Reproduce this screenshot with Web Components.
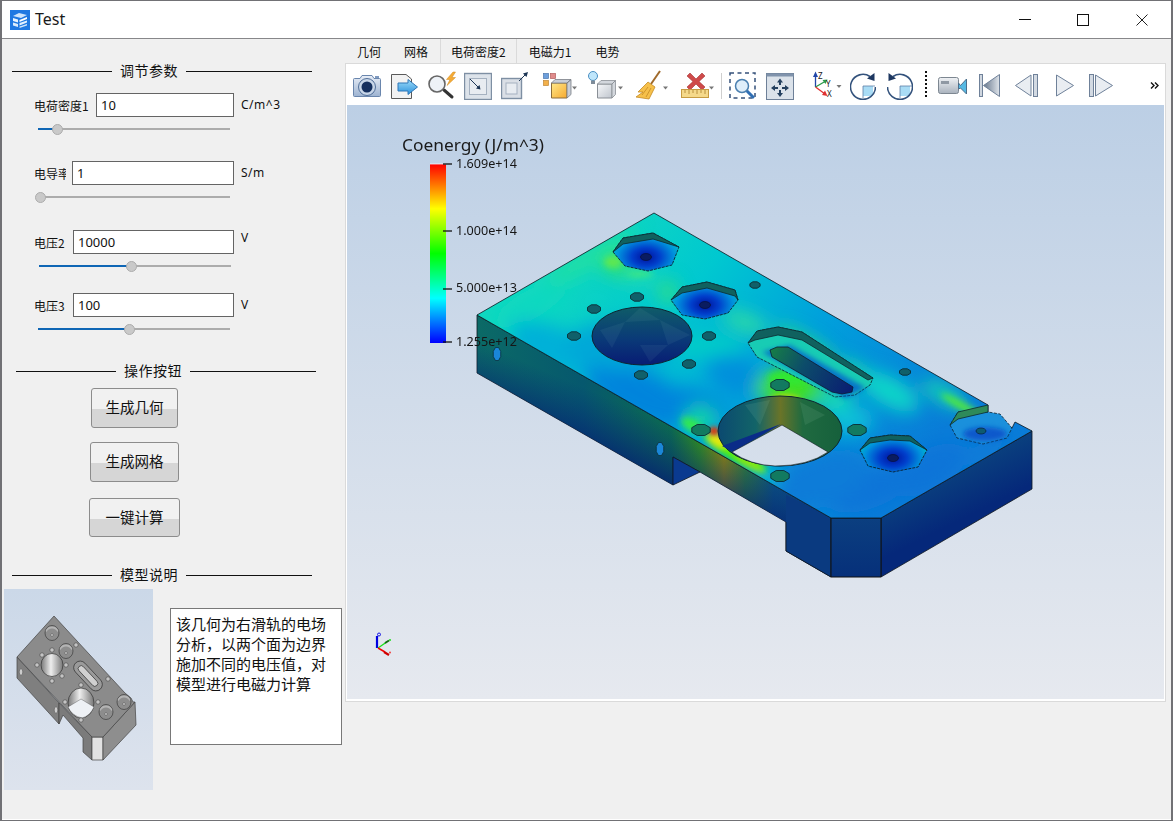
<!DOCTYPE html>
<html lang="zh">
<head>
<meta charset="utf-8">
<title>Test</title>
<style>
  html, body { margin: 0; padding: 0; background: #f0f0f0; }
  body { font-family: "Noto Sans", "Noto Sans CJK SC", sans-serif; color: #111; }
</style>
</head>
<body>
<app-window>
  <title-bar slot="title" text="Test"></title-bar>

  <side-panel slot="side">
    <section-heading text="调节参数" style="margin:22px 0 0 10px"></section-heading>

    <param-row label="电荷密度1" label-w="62" input-w="138" value="10" unit="C/m^3" style="margin:12px 0 0 32px"></param-row>
    <param-slider fill="19" style="margin:4px 0 0 36px"></param-slider>

    <param-row label="电导率" label-w="38" input-w="162" value="1" unit="S/m" style="margin:24px 0 0 32px"></param-row>
    <param-slider fill="2" style="margin:4px 0 0 36px"></param-slider>

    <param-row label="电压2" label-w="39" input-w="161" value="10000" unit="V" shift="-4" style="margin:25px 0 0 32px"></param-row>
    <param-slider fill="92" style="margin:4px 0 0 37px"></param-slider>

    <param-row label="电压3" label-w="39" input-w="161" value="100" unit="V" style="margin:19px 0 0 32px"></param-row>
    <param-slider fill="91" style="margin:4px 0 0 36px"></param-slider>

    <section-heading text="操作按钮" style="margin:24px 0 0 14px"></section-heading>
    <push-button text="生成几何" style="width:87px;height:40px;margin:7px 0 0 89px"></push-button>
    <push-button text="生成网格" style="width:89px;height:40px;margin:14px 0 0 88px"></push-button>
    <push-button text="一键计算" style="width:91px;height:39px;margin:16px 0 0 87px"></push-button>

    <section-heading text="模型说明" style="margin:28px 0 0 10px"></section-heading>
    <model-note style="margin:4px 0 0 2px">该几何为右滑轨的电场分析，以两个面为边界施加不同的电压值，对模型进行电磁力计算</model-note>
  </side-panel>

  <tab-bar slot="tabs">
    <tab-item text="几何" style="padding:0 11px 0 12px"></tab-item>
    <tab-item text="网格" style="padding:0 12px 0 12px"></tab-item>
    <tab-item text="电荷密度2" active style="padding:0 10px 0 10px"></tab-item>
    <tab-item text="电磁力1" style="padding:0 12px 0 12px"></tab-item>
    <tab-item text="电势" style="padding:0 12px 0 12px"></tab-item>
  </tab-bar>

  <tool-bar slot="tools">
    <tool-icon kind="camera" gap="6"></tool-icon>
    <tool-icon kind="docarrow" gap="10"></tool-icon>
    <tool-icon kind="zoombolt" gap="9"></tool-icon>
    <tool-icon kind="boxin" gap="8"></tool-icon>
    <tool-icon kind="boxout" gap="9"></tool-icon>
    <tool-icon kind="colorbox" gap="14"></tool-icon>
    <tool-icon kind="lightbox" gap="11"></tool-icon>
    <tool-icon kind="broom" gap="13"></tool-icon>
    <tool-icon kind="ruler" gap="12"></tool-icon>
    <tool-icon kind="sep" gap="6"></tool-icon>
    <tool-icon kind="zoomrect" gap="7"></tool-icon>
    <tool-icon kind="move" gap="10"></tool-icon>
    <tool-icon kind="axes" gap="18"></tool-icon>
    <tool-icon kind="rotcw" gap="8"></tool-icon>
    <tool-icon kind="rotccw" gap="11"></tool-icon>
    <tool-icon kind="dots" gap="12"></tool-icon>
    <tool-icon kind="video" gap="11"></tool-icon>
    <tool-icon kind="first" gap="12"></tool-icon>
    <tool-icon kind="prev" gap="15"></tool-icon>
    <tool-icon kind="play" gap="18"></tool-icon>
    <tool-icon kind="next" gap="15"></tool-icon>
    <tool-icon kind="more" gap="37"></tool-icon>
  </tool-bar>

  <field-view slot="view"></field-view>
</app-window>

<script>
class AppWindow extends HTMLElement {
  constructor() {
    super();
    this.attachShadow({ mode: "open" });
    this.shadowRoot.innerHTML = `
      <style>
        :host { display:flex; flex-direction:column; box-sizing:border-box; width:1173px; height:821px; overflow:hidden;
                border:solid #717175; border-width:1px 2px 1px 2px; background:#f0f0f0; }
        .body { flex:1; display:flex; min-height:0; border-bottom:1px solid #fff; }
        .side { width:343px; flex:none; }
        .main { width:821px; flex:none; display:flex; flex-direction:column; }
        .pane { box-sizing:border-box; height:639px; border:1px solid #dadada; padding:1px; background:#fff; display:flex; flex-direction:column; }
      </style>
      <slot name="title"></slot>
      <div class="body">
        <div class="side"><slot name="side"></slot></div>
        <div class="main">
          <slot name="tabs"></slot>
          <div class="pane">
            <slot name="tools"></slot>
            <slot name="view"></slot>
          </div>
        </div>
      </div>
    `;
  }
}

class TitleBar extends HTMLElement {
  constructor() {
    super();
    this.attachShadow({ mode: "open" });
  }
  connectedCallback() {
    this.shadowRoot.innerHTML = `
      <style>
        :host { display:flex; align-items:center; height:37px; background:#fff; border-bottom:1px solid #87878a; flex:none; }
        svg.logo { margin:0 5px 0 8px; }
        .name { flex:1; font:16px "Noto Sans", sans-serif; color:#1a1a1a; margin-top:-1px; }
        .btn { width:58px; height:37px; display:flex; align-items:center; justify-content:center; }
        .max { margin-right:1px; }
      </style>
      <svg class="logo" width="20" height="20" viewBox="0 0 20 20">
        <rect width="20" height="20" fill="#1f78e2"/>
        <path d="M3 6 9 3 17 5 11 8Z" fill="#cfe4fb"/>
        <path d="M3 8 8 9.500V12.500L3 11Z" fill="#eaf4ff"/>
        <path d="M3 12.500 8 14V17L3 15.500Z" fill="#dcecfd"/>
        <path d="M9.500 10 17 7V9L9.500 12Z" fill="#fff"/>
        <path d="M9.500 13 17 10.500V12.500L9.500 15.500Z" fill="#e3f0fe"/>
        <path d="M9.500 16.500 17 14V15.500L9.500 18Z" fill="#cfe4fb"/>
      </svg>
      <div class="name">${this.getAttribute("text")}</div>
      <div class="btn"><svg width="12" height="12"><path d="M0 5.500H12" stroke="#111"/></svg></div>
      <div class="btn max"><svg width="12" height="12"><rect x=".5" y=".5" width="11" height="11" fill="none" stroke="#111"/></svg></div>
      <div class="btn"><svg width="12" height="12"><path d="M.5 .5 11.500 11.500M11.500 .5 .5 11.500" stroke="#222"/></svg></div>
    `;
  }
}

class SectionHeading extends HTMLElement {
  constructor() {
    super();
    this.attachShadow({ mode: "open" });
  }
  connectedCallback() {
    this.shadowRoot.innerHTML = `
      <style>
        :host { display:flex; align-items:center; width:300px; height:20px; font:14px "Noto Sans CJK SC", sans-serif; letter-spacing:.5px; color:#111; }
        i { height:1px; background:#111; }
        i.a { width:100px; }
        i.b { flex:1; }
        span { padding:0 8px; white-space:nowrap; margin-top:-3px; }
      </style>
      <i class="a"></i><span>${this.getAttribute("text")}</span><i class="b"></i>
    `;
  }
}

class ParamRow extends HTMLElement {
  constructor() {
    super();
    this.attachShadow({ mode: "open" });
  }
  connectedCallback() {
    const shift = this.getAttribute("shift") || 0;
    this.shadowRoot.innerHTML = `
      <style>
        :host { display:flex; align-items:center; height:24px; font:12px "Noto Sans CJK SC", sans-serif; color:#111; }
        .label { width:${this.getAttribute("label-w")}px; overflow:hidden; white-space:nowrap; box-sizing:border-box; }
        .input { box-sizing:border-box; height:24px; width:${this.getAttribute("input-w")}px; background:#fff; border:1px solid #646464;
                 font:13px "Noto Sans", sans-serif; line-height:22px; padding-left:4px; }
        .unit { margin:-1px 0 0 7px; font:12px "Noto Sans", sans-serif; position:relative; top:${shift}px; letter-spacing:.5px; }
      </style>
      <div class="label"><div style="width:${Math.min(+this.getAttribute("label-w") - 6, 56)}px;overflow:hidden">${this.getAttribute("label")}</div></div>
      <div class="input">${this.getAttribute("value")}</div>
      <div class="unit">${this.getAttribute("unit")}</div>
    `;
  }
}

class ParamSlider extends HTMLElement {
  constructor() {
    super();
    this.attachShadow({ mode: "open" });
  }
  connectedCallback() {
    const fill = +this.getAttribute("fill");
    this.shadowRoot.innerHTML = `
      <style>
        :host { display:block; position:relative; width:192px; height:16px; }
        .track { position:absolute; left:0; right:0; top:7px; height:2px; background:#acacac; }
        .done { position:absolute; left:0; top:7px; height:2px; width:${fill}px; background:#0f66b5; }
        .knob { position:absolute; left:${fill - 5}px; top:3px; width:9px; height:9px; border-radius:50%; background:#c9c9c9; border:1px solid #acacac; }
      </style>
      <div class="track"></div><div class="done"></div><div class="knob"></div>
    `;
  }
}

class PushButton extends HTMLElement {
  constructor() {
    super();
    this.attachShadow({ mode: "open" });
  }
  connectedCallback() {
    this.shadowRoot.innerHTML = `
      <style>
        :host { display:flex; align-items:center; justify-content:center; box-sizing:border-box; border:1px solid #8c8c8c; border-radius:3px;
                background:linear-gradient(#f1f1f1 0 53%, #d6d6d6 53% 100%); font:14.500px "Noto Sans CJK SC", sans-serif; color:#111; }
        span { margin-top:-3px; }
      </style>
      <span>${this.getAttribute("text")}</span>
    `;
  }
}

class ModelNote extends HTMLElement {
  constructor() {
    super();
    this.attachShadow({ mode: "open" });
    this.shadowRoot.innerHTML = `
      <style>
        :host { display:flex; align-items:flex-start; gap:17px; }
        .box { box-sizing:border-box; width:172px; height:137px; margin-top:19px; background:#fff; border:1px solid #787878;
               padding:5px 5px; font:15px/20px "Noto Sans CJK SC", sans-serif; color:#111; }
      </style>
      <part-thumb></part-thumb>
      <div class="box"><slot></slot></div>
    `;
  }
}

class PartThumb extends HTMLElement {
  constructor() {
    super();
    this.attachShadow({ mode: "open" });
    const small = [[52,650],[42,655],[76,645],[37,665],[66,665],[52,681],[62,676],[81,685],[108,679],[65,702],[98,702],[81,720]];
    const dots = small.map(([x, y]) => `<circle cx="${x}" cy="${y}" r="2.200" fill="#c4c4c4" stroke="#444" stroke-width=".6"/>`).join("");
    const bored = [[52,633],[66,651],[106,712],[124,702]].map(([x, y]) => `
      <ellipse cx="${x}" cy="${y}" rx="7" ry="7.500" fill="#8d8d8d" stroke="#3c3c3c" stroke-width=".7"/>
      <path d="M${x-6.500} ${y-2}A7 7 0 0 1 ${x+6.500} ${y-2}L${x+5.500} ${y-1}A6 6 0 0 0 ${x-5.500} ${y-1}Z" fill="#b4b4b4"/>
      <circle cx="${x}" cy="${y+2}" r="1.300" fill="#ddd" stroke="#444" stroke-width=".5"/>`).join("");
    this.shadowRoot.innerHTML = `
      <style>:host { display:block; flex:none; width:149px; height:201px; } svg { display:block; }</style>
      <svg width="149" height="201" viewBox="4 589 149 201">
        <defs>
          <linearGradient id="tb" x1="0" y1="0" x2="0" y2="1"><stop offset="0" stop-color="#cbd8e8"/><stop offset="1" stop-color="#dde3ed"/></linearGradient>
          <linearGradient id="cyl" x1="0" y1="0" x2="1" y2="0"><stop offset="0" stop-color="#777"/><stop offset=".45" stop-color="#eee"/><stop offset="1" stop-color="#777"/></linearGradient>
        </defs>
        <rect x="4" y="589" width="149" height="201" fill="url(#tb)"/>
        <g stroke="#444" stroke-width=".7" stroke-linejoin="round">
          <path d="M17 657 59 703V724L17 678Z" fill="#7f7f7f"/>
          <path d="M59 703 92 737V760L83 752V738L63 715 59 724Z" fill="#7b7b7b"/>
          <path d="M92 737H103V760H92Z" fill="#e2e2e2"/>
          <path d="M103 737 135 702 136 725 103 760Z" fill="#8e8e8e"/>
          <path d="M54 616 125 693 131 698 133 702 135 702 103 737H92L17 657Z" fill="#8b8b8b"/>
        </g>
        <ellipse cx="52" cy="665" rx="11" ry="11.500" fill="url(#cyl)" stroke="#333" stroke-width=".7"/>
        <g transform="rotate(47 88 676)">
          <rect x="70" y="669.500" width="36" height="13" rx="6.500" fill="#9a9a9a" stroke="#333" stroke-width=".7"/>
          <rect x="75" y="673" width="26" height="6" rx="3" fill="#d0d0d0" stroke="#333" stroke-width=".7"/>
        </g>
        <ellipse cx="81" cy="703" rx="13" ry="15" fill="url(#cyl)" stroke="#333" stroke-width=".7"/>
        <path d="M68 707 81 699 94 707Q90 716 82 718 72 716 68 707Z" fill="#eef1f5" stroke="#444" stroke-width=".4"/>
        ${bored}${dots}
        <ellipse cx="21" cy="672" rx="1.800" ry="3.200" fill="#ccc" stroke="#444" stroke-width=".5"/>
        <ellipse cx="56" cy="710" rx="1.800" ry="3.200" fill="#ccc" stroke="#444" stroke-width=".5"/>
      </svg>
    `;
  }
}

class TabBar extends HTMLElement {
  constructor() {
    super();
    this.attachShadow({ mode: "open" });
    this.shadowRoot.innerHTML = `
      <style>:host { display:flex; height:24px; flex:none; }</style>
      <slot></slot>
    `;
  }
}

class TabItem extends HTMLElement {
  constructor() {
    super();
    this.attachShadow({ mode: "open" });
  }
  connectedCallback() {
    this.shadowRoot.innerHTML = `
      <style>
        :host { display:flex; align-items:center; height:24px; box-sizing:border-box; font:12px "Noto Sans CJK SC", sans-serif; color:#111; white-space:nowrap; }
        :host([active]) { border:solid #dadada; border-width:0 1px; }
      </style>
      ${this.getAttribute("text")}
    `;
  }
}

class ToolBar extends HTMLElement {
  constructor() {
    super();
    this.attachShadow({ mode: "open" });
    this.shadowRoot.innerHTML = `
      <style>:host { display:flex; align-items:flex-start; flex:none; height:40px; padding-top:5px; box-sizing:border-box; background:#fff; }</style>
      <slot></slot>
    `;
  }
}

const arrowDown = (x) => `<path d="M${x} 16.500h5l-2.500 3z" fill="#777"/>`;

const TOOL_ICONS = {
  camera: [28, `
    <defs><linearGradient id="g" x1="0" y1="0" x2="0" y2="1"><stop offset="0" stop-color="#e8eef7"/><stop offset="1" stop-color="#9db3d1"/></linearGradient></defs>
    <path d="M1.500 8.500H7L9 5.500H19L21 8.500H26.500Q27.500 8.500 27.500 9.500V25.500Q27.500 26.500 26.500 26.500H1.500Q.5 26.500 .5 25.500V9.500Q.5 8.500 1.500 8.500Z" fill="url(#g)" stroke="#6a86ad"/>
    <circle cx="14" cy="17" r="8.500" fill="#c8d6e8" stroke="#516f99"/>
    <circle cx="14" cy="17" r="5.500" fill="#15305f"/>
    <rect x="22" y="6" width="4" height="2" fill="#7f9ac0"/>`],
  docarrow: [27, `
    <defs><linearGradient id="g" x1="0" y1="0" x2="0" y2="1"><stop offset="0" stop-color="#9edcf9"/><stop offset="1" stop-color="#2b91dc"/></linearGradient></defs>
    <path d="M.5 4.500H15L20.500 9V28.500H.5Z" fill="#f2f2f2" stroke="#5a5a5a"/>
    <path d="M7 13H17V9.500L26.500 17 17 24.500V21H7Z" fill="url(#g)" stroke="#2f77b8"/>`],
  zoombolt: [29, `
    <path d="M17 20 25 27" stroke="#333" stroke-width="3" stroke-linecap="round"/>
    <circle cx="10" cy="14" r="8" fill="#eef2f7" stroke="#666" stroke-width="1.600"/>
    <path d="M26 2 19.500 9.500H23L20 15.500 28.500 7.500H25L28.500 2Z" fill="#f5ab36" stroke="#d08a20" stroke-width=".5"/>`],
  boxin: [28, `
    <rect x=".5" y="3.500" width="27" height="26" fill="#dde3ea" stroke="#7e8fa3" stroke-width="1.400"/>
    <rect x="5.500" y="8.500" width="17" height="16" fill="#e8ecf1" stroke="#a5b1c0"/>
    <path d="M6 9 14.500 17.500" stroke="#1c3554" stroke-width="1"/>
    <path d="M16.500 19.500 12 18.500 15.500 15Z" fill="#1c3554"/>`],
  boxout: [28, `
    <rect x=".5" y="8.500" width="20" height="20" fill="#dadfe6" stroke="#7e8fa3" stroke-width="1.400"/>
    <rect x="5" y="13" width="11" height="11" fill="#e8ecf1" stroke="#a5b1c0"/>
    <path d="M18 11 25 4" stroke="#1c3554" stroke-width="1"/>
    <path d="M27 2 25.500 7 22 3.500Z" fill="#1c3554"/>`],
  colorbox: [34, `
    <defs><linearGradient id="g" x1="0" y1="0" x2="1" y2="1"><stop offset="0" stop-color="#ffe98a"/><stop offset="1" stop-color="#f6a92f"/></linearGradient></defs>
    <rect x=".5" y="3.500" width="5" height="5" fill="#6d9fdc" stroke="#4a76ad" stroke-width=".7"/>
    <rect x="7.500" y="3.500" width="5" height="5" fill="#e08c8c" stroke="#b25c5c" stroke-width=".7"/>
    <rect x=".5" y="10.500" width="5" height="5" fill="#f2b04a" stroke="#c18736" stroke-width=".7"/>
    <path d="M8.500 13H24V28H8.500Z" fill="url(#g)" stroke="#8c6d3a"/>
    <path d="M8.500 13 12 9.500H28L24 13ZM24 13 28 9.500V24.500L24 28Z" fill="#c9ced6" stroke="#7a7f87" stroke-width=".8"/>
    ${arrowDown(29)}`],
  lightbox: [35, `
    <defs><linearGradient id="g" x1="0" y1="0" x2="1" y2="1"><stop offset="0" stop-color="#f7f8fa"/><stop offset="1" stop-color="#bfc5cd"/></linearGradient></defs>
    <circle cx="5" cy="6" r="4.500" fill="#bfe6fb" stroke="#4a8fc2"/>
    <rect x="3" y="10.500" width="4" height="3.500" fill="#7f8c99"/>
    <path d="M9.500 14H24V28H9.500Z" fill="url(#g)" stroke="#8a8f96"/>
    <path d="M9.500 14 13 10.500H27.500L24 14ZM24 14 27.500 10.500V24.500L24 28Z" fill="#d3d7dd" stroke="#8a8f96" stroke-width=".8"/>
    ${arrowDown(30)}`],
  broom: [33, `
    <path d="M24 1 15 14" stroke="#a06a2c" stroke-width="2"/>
    <path d="M12 12 19 17 13 29 0 27 7 22 2 22Z" fill="#f6c04a" stroke="#c48a24" stroke-width=".8"/>
    <path d="M6 25 12 17M10 27 15 18" stroke="#c48a24" stroke-width=".8"/>
    ${arrowDown(27)}`],
  ruler: [34, `
    <path d="M9 3 15 9 21 3 24 6 18 11.500 24 17 21 20 15 14 9 20 6 17 12 11.500 6 6Z" fill="#cf4a4a" stroke="#a53030" stroke-width=".6"/>
    <rect x=".5" y="19.500" width="27" height="8" fill="#f5d98a" stroke="#c69b42"/>
    <path d="M4 20v3M8 20v4M12 20v3M16 20v4M20 20v3M24 20v4" stroke="#a87e2b" stroke-width=".8"/>
    ${arrowDown(28)}`],
  sep: [1, `<path d="M.5 3V29" stroke="#cfcfcf"/>`],
  zoomrect: [27, `
    <rect x="1" y="3" width="25" height="25" fill="none" stroke="#34507a" stroke-width="1.500" stroke-dasharray="4 3.500"/>
    <path d="M18 21 24 27" stroke="#2f6fb5" stroke-width="3" stroke-linecap="round"/>
    <circle cx="13" cy="16" r="6.500" fill="#dfeefa" stroke="#4a7fb0" stroke-width="1.500"/>`],
  move: [28, `
    <rect x=".5" y="3.500" width="27" height="26" fill="#dbe2ea" stroke="#6e8098"/>
    <rect x=".5" y="3.500" width="27" height="3" fill="#8093ac"/>
    <g fill="#24405f">
      <path d="M14 8.500 17 12.500H15V15H13V12.500H11Z"/>
      <path d="M14 27 11 23H13V20H15V23H17Z"/>
      <path d="M5 18 9 15V17H12V19H9V21Z"/>
      <path d="M23 18 19 21V19H16V17H19V15Z"/>
    </g>`],
  axes: [30, `
    <path d="M3.500 17V4" stroke="#2146a8" stroke-width="1.300"/><path d="M3.500 1.500 6 7H1Z" fill="#2146a8"/>
    <path d="M3.500 17 13 11.500" stroke="#2a9a4a" stroke-width="1.300"/><path d="M15.500 9.500 13.500 14 10.500 10Z" fill="#2a9a4a"/>
    <path d="M3.500 17 13 24" stroke="#e03030" stroke-width="1.300"/><path d="M15.500 26 10 25 13 20.500Z" fill="#e03030"/>
    <text x="6" y="9" font-family="Noto Sans" font-size="8" fill="#222">Z</text>
    <text x="14" y="17" font-family="Noto Sans" font-size="8" fill="#222">Y</text>
    <text x="15" y="27" font-family="Noto Sans" font-size="8" fill="#222">X</text>
    <path d="M24.500 15h5l-2.500 3z" fill="#777"/>`],
  rotcw: [26, `
    <path d="M13 16H23V26H13Z" fill="#a9dcf5"/>
    <path d="M13 16V28M13 16H25" stroke="#5d7ea6" stroke-width=".8"/>
    <path d="M20 6.500A12.500 12.500 0 1 0 25.500 17" fill="none" stroke="#33527c" stroke-width="1.600"/>
    <path d="M24.500 3 24.500 11 17 8.500Z" fill="#1d3760"/>`],
  rotccw: [26, `
    <path d="M13 16H23V26H13Z" fill="#a9dcf5"/>
    <path d="M13 16V28M13 16H25" stroke="#5d7ea6" stroke-width=".8"/>
    <path d="M6 6.500A12.500 12.500 0 1 1 .5 17" fill="none" stroke="#33527c" stroke-width="1.600"/>
    <path d="M1.500 3 1.500 11 9 8.500Z" fill="#1d3760"/>`],
  dots: [2, `<path d="M1 1V27" stroke="#111" stroke-width="2" stroke-dasharray="2 2"/>`],
  video: [29, `
    <defs><linearGradient id="g" x1="0" y1="0" x2="0" y2="1"><stop offset="0" stop-color="#f0f2f5"/><stop offset="1" stop-color="#a9b2bd"/></linearGradient></defs>
    <rect x=".5" y="7.500" width="20" height="16" rx="2" fill="url(#g)" stroke="#7d8791"/>
    <rect x="3" y="11" width="8" height="3" fill="#8f98a3"/>
    <path d="M20.500 13 22.500 15.500 28.500 9V24L22.500 18 20.500 19Z" fill="#57b9e3" stroke="#4d6f8c"/>`],
  first: [21, `
    <defs><linearGradient id="g" x1="0" y1="0" x2="1" y2="0"><stop offset="0" stop-color="#67778c"/><stop offset="1" stop-color="#dfe4ea"/></linearGradient></defs>
    <rect x=".5" y="4.500" width="3" height="22" fill="#cfd6df" stroke="#6f8199"/>
    <path d="M4.500 15.500 20.500 4.500V26.500Z" fill="url(#g)" stroke="#6f8199"/>`],
  prev: [23, `
    <path d="M.5 15.500 16 5V26Z" fill="#e9edf2" stroke="#6f8199"/>
    <rect x="18.500" y="4.500" width="4" height="22" fill="#d3dae3" stroke="#6f8199"/>`],
  play: [18, `<path d="M.5 5 17.500 15.500 .5 26Z" fill="#e9edf2" stroke="#6f8199"/>`],
  next: [24, `
    <rect x=".5" y="4.500" width="4" height="22" fill="#d3dae3" stroke="#6f8199"/>
    <path d="M6.500 5 23.500 15.500 6.500 26Z" fill="#e9edf2" stroke="#6f8199"/>`],
  more: [9, `<path d="M1 12.500 4 15.500 1 18.500M5 12.500 8 15.500 5 18.500" fill="none" stroke="#111" stroke-width="1.400"/>`]
};

class ToolIcon extends HTMLElement {
  constructor() {
    super();
    this.attachShadow({ mode: "open" });
  }
  connectedCallback() {
    const [w, body] = TOOL_ICONS[this.getAttribute("kind")];
    this.shadowRoot.innerHTML = `
      <style>:host { display:block; flex:none; width:${w}px; height:30px; margin-left:${this.getAttribute("gap")}px; } svg { display:block; }</style>
      <svg width="${w}" height="30" viewBox="0 0 ${w} 30">${body}</svg>
    `;
  }
}

// colour field: blurred blobs clipped to the top face
const BLOBS = [
  [590,258,55,9,-30,"#20e0a0"], [618,264,16,12,0,"#30e070"], [640,278,18,7,0,"#20dcb0"], [668,292,9,12,0,"#30e080"],
  [530,305,40,14,-30,"#10d8c0"], [555,350,50,22,25,"#00b0d8"], [640,395,60,25,25,"#0084dc"], [625,345,60,25,0,"#00a8d8"],
  [735,375,30,20,25,"#0090dc"], [700,405,30,14,25,"#0084dc"], [705,345,40,12,0,"#00ccc8"], [745,322,24,8,20,"#30e0a0"],
  [805,345,35,8,30,"#28e080"], [860,375,28,8,30,"#18e0a0"], [790,388,34,20,0,"#40e020"],
  [700,418,16,12,0,"#18d8a0"], [760,472,24,6,30,"#10d8c0"], [835,400,18,12,0,"#18dcb0"],
  [850,420,24,14,0,"#10c0d8"], [890,392,32,14,30,"#10d8c8"], [945,395,26,8,30,"#18dcb0"],
  [870,490,44,18,-20,"#0a74d8"], [820,480,50,26,-20,"#0a7cd8"], [930,470,40,20,-30,"#0a74d8"], [985,450,28,8,-30,"#0a7cd8"]
];
// tighter hot spots, less blur
const HOT = [
  [735,453,36,8,30,"#38f010"], [736,453,26,5,30,"#60f010"], [718,440,11,6,30,"#e8e810"], [750,464,16,4,30,"#90e810"], [692,425,12,6,30,"#30e850"],
  [785,402,16,7,0,"#d8e010"], [790,378,22,7,0,"#30e830"], [613,262,9,6,0,"#60e850"], [962,406,24,4,30,"#50e840"], [640,274,13,3,0,"#40e880"]
];
const SMALL_HOLES = [[594,309,7,4.5],[637,297,7,4.5],[574,336,7,4.5],[709,336,7,4.5],[641,375,7,4.5],[689,364,7,4.5],[755,285,5.5,3.5],
  [905,372,6,3.5],[780,385,10,6],[701,430,10,6],[857,430,10,6],[780,476,10,6]];

const polyStr = (pts) => pts.map((p) => p.join(",")).join(" ");

const blobTags = (list) => list.map(([x, y, rx, ry, r, c]) => `<ellipse cx="${x}" cy="${y}" rx="${rx}" ry="${ry}" fill="${c}" transform="rotate(${r} ${x} ${y})"/>`).join("");

function octagon(x, y, rx, ry) {
  const pts = [];
  for (let i = 0; i < 8; i++) {
    const a = Math.PI / 8 + i * Math.PI / 4;
    pts.push([(x + rx * Math.cos(a)).toFixed(1), (y + ry * Math.sin(a)).toFixed(1)]);
  }
  return polyStr(pts);
}

function counterbore(id, pts, k, drop, dot) {
  const top = pts.slice(0, k);
  // wall tapers out at both ends of the visible rim
  const inner = top.map(([x, y], i) => [x, i === 0 || i === k - 1 ? y : y + drop]).reverse();
  const wall = top.concat(inner);
  return `
    <radialGradient id="${id}" gradientUnits="userSpaceOnUse" cx="${dot[0]}" cy="${dot[1]}" r="40" gradientTransform="translate(0 ${dot[1] * .35}) scale(1 .65)">
      <stop offset="0" stop-color="#00109c"/><stop offset=".35" stop-color="#0040cc"/><stop offset=".7" stop-color="#0090dc"/><stop offset="1" stop-color="#00c8c8"/>
    </radialGradient>
    <polygon points="${polyStr(pts)}" fill="url(#${id})" stroke="#0a2030" stroke-width=".9" stroke-dasharray="3 1"/>
    <polygon points="${polyStr(wall)}" fill="#10615f" stroke="#0c2a30" stroke-width=".8"/>
    <ellipse cx="${dot[0]}" cy="${dot[1]}" rx="5.500" ry="3.500" fill="#0a1c60" stroke="#06103c" stroke-width=".7"/>
  `;
}

class FieldView extends HTMLElement {
  constructor() {
    super();
    this.attachShadow({ mode: "open" });
    const holes = SMALL_HOLES.map(([x, y, rx, ry], i) => `<polygon points="${octagon(x, y, rx, ry)}" fill="${i > 7 ? "#127a60" : "#10606a"}" stroke="#0b2c34" stroke-width=".9"/>`).join("");
    const label = (y, t) => `<text x="456" y="${y}" font-size="12.500" textLength="61" lengthAdjust="spacingAndGlyphs" fill="#161616">${t}</text>`;
    const tick = (y) => `<path d="M443 ${y}H452" stroke="#111" stroke-width="1.300"/>`;
    this.shadowRoot.innerHTML = `
      <style>:host { display:block; flex:none; height:594px; } svg { display:block; font-family:"Noto Sans", sans-serif; }</style>
      <svg width="817" height="594" viewBox="347 105 817 594">
        <defs>
          <linearGradient id="bg" gradientUnits="userSpaceOnUse" x1="0" y1="105" x2="0" y2="699"><stop offset="0" stop-color="#bccfe5"/><stop offset="1" stop-color="#e6e9ef"/></linearGradient>
          <linearGradient id="bar" x1="0" y1="0" x2="0" y2="1">
            <stop offset="0" stop-color="#ff0000"/><stop offset=".25" stop-color="#ffff00"/><stop offset=".5" stop-color="#00ff00"/><stop offset=".75" stop-color="#00ffff"/><stop offset="1" stop-color="#0000ff"/>
          </linearGradient>
          <linearGradient id="topbase" gradientUnits="userSpaceOnUse" x1="560" y1="260" x2="880" y2="510">
            <stop offset="0" stop-color="#10d8c0"/><stop offset=".3" stop-color="#00c8d0"/><stop offset=".6" stop-color="#00a0dc"/><stop offset="1" stop-color="#0a7cd8"/>
          </linearGradient>
          <linearGradient id="side" gradientUnits="userSpaceOnUse" x1="477" y1="0" x2="830" y2="0">
            <stop offset="0" stop-color="#0b6a66"/><stop offset=".3" stop-color="#06586e"/><stop offset=".55" stop-color="#0c6a50"/><stop offset=".63" stop-color="#2f8a22"/>
            <stop offset=".7" stop-color="#8a8212"/><stop offset=".76" stop-color="#2f7a3c"/><stop offset=".84" stop-color="#0c5482"/><stop offset="1" stop-color="#0a3f84"/>
          </linearGradient>
          <linearGradient id="sideshade" gradientUnits="userSpaceOnUse" x1="660" y1="420" x2="635" y2="478">
            <stop offset="0" stop-color="#062a78" stop-opacity="0"/><stop offset="1" stop-color="#051f70" stop-opacity=".95"/>
          </linearGradient>
          <linearGradient id="rightface" gradientUnits="userSpaceOnUse" x1="930" y1="460" x2="960" y2="520">
            <stop offset="0" stop-color="#0c4a80"/><stop offset="1" stop-color="#05287a"/>
          </linearGradient>
          <linearGradient id="chamfer" x1="0" y1="0" x2="0" y2="1"><stop offset="0" stop-color="#0b3f80"/><stop offset="1" stop-color="#06307a"/></linearGradient>
          <linearGradient id="bighole" x1="0" y1="0" x2="0" y2="1"><stop offset="0" stop-color="#0f5c68"/><stop offset=".55" stop-color="#0a3a78"/><stop offset="1" stop-color="#081c74"/></linearGradient>
          <linearGradient id="thruwall" gradientUnits="userSpaceOnUse" x1="719" y1="0" x2="842" y2="0">
            <stop offset="0" stop-color="#0b4a70"/><stop offset=".3" stop-color="#126468"/><stop offset=".5" stop-color="#6a7428"/><stop offset=".68" stop-color="#1f6a40"/><stop offset="1" stop-color="#16603c"/>
          </linearGradient>
          <linearGradient id="slotwall" gradientUnits="userSpaceOnUse" x1="772" y1="350" x2="850" y2="392">
            <stop offset="0" stop-color="#167c48"/><stop offset=".4" stop-color="#0c4c6a"/><stop offset="1" stop-color="#0a1e72"/>
          </linearGradient>
          <filter id="blur" x="-30%" y="-30%" width="160%" height="160%"><feGaussianBlur stdDeviation="9"/></filter>
          <filter id="tight" x="-30%" y="-30%" width="160%" height="160%"><feGaussianBlur stdDeviation="3"/></filter>
          <filter id="soft" x="-60%" y="-60%" width="220%" height="220%"><feGaussianBlur stdDeviation="2.500"/></filter>
          <clipPath id="topclip"><polygon points="654,213 988,405 988,413 1012,428 1015,422 1032,431 881,518 831,518 477,315"/></clipPath>
        </defs>
        <rect x="347" y="105" width="817" height="594" fill="url(#bg)"/>

        <!-- side walls -->
        <path d="M477 315 831 518V577L786 551V522L700 472 673 457V485L477 373Z" fill="url(#side)" stroke="#101820" stroke-width=".8"/>
        <path d="M477 315 831 518V577L786 551V522L700 472 673 457V485L477 373Z" fill="url(#sideshade)"/>
        <path d="M673 457 700 472 673 485Z" fill="#0a3a90" stroke="#101820" stroke-width=".8"/>
        <path d="M786 495 831 518V577L786 551Z" fill="#0a3a80"/>
        <path d="M786 522V551L831 577V518" fill="none" stroke="#101820" stroke-width=".8"/>
        <path d="M881 518 1032 431 1032 489 881 577Z" fill="url(#rightface)" stroke="#101820" stroke-width=".8"/>
        <path d="M831 518H881V577H831Z" fill="url(#chamfer)" stroke="#111" stroke-width="1"/>
        <polygon points="${octagon(497, 354, 4, 7)}" fill="#1a86d8" stroke="#0a2a30" stroke-width=".7"/>
        <polygon points="${octagon(660, 449, 4, 7)}" fill="#1a86d8" stroke="#0a2a30" stroke-width=".7"/>

        <!-- top face -->
        <g clip-path="url(#topclip)">
          <rect x="470" y="205" width="570" height="320" fill="url(#topbase)"/>
          <g filter="url(#blur)">${blobTags(BLOBS)}</g>
          <g filter="url(#tight)">${blobTags(HOT)}</g>
          <ellipse cx="714" cy="431" rx="5" ry="4" fill="#f02800" filter="url(#soft)"/>
        </g>
        <polygon points="654,213 988,405 988,413 1012,428 1015,422 1032,431 881,518 831,518 477,315" fill="none" stroke="#0c1620" stroke-width=".8"/>

        <!-- big blind hole -->
        <ellipse cx="642" cy="336" rx="50" ry="29" fill="url(#bighole)" stroke="#0c2430" stroke-width="1"/>
        <g opacity=".07" fill="#9ad0c8">
          <polygon points="640,308 660,320 625,322"/><polygon points="600,330 625,322 612,348"/><polygon points="660,320 690,335 668,345"/><polygon points="640,345 668,345 650,362"/>
        </g>

        <!-- counterbored holes -->
        ${counterbore("c1", [[613,252],[623,238],[653,233],[679,247],[672,265],[648,271],[625,266]], 4, 6, [646,257])}
        ${counterbore("c2", [[671,300],[682,287],[707,282],[735,290],[738,300],[728,313],[705,319],[682,315]], 5, 6, [705,305])}
        ${counterbore("c3", [[860,450],[870,438],[890,435],[910,436],[927,450],[918,467],[893,472],[868,466]], 5, 5, [893,458])}
        <polygon points="950,425 957,438 983,444 1007,438 1012,428 1000,414 988,412 958,412" fill="#1a90dc" stroke="#0a2030" stroke-width=".8" stroke-dasharray="3 1.500"/>
        <ellipse cx="985" cy="434" rx="22" ry="7" fill="#0a58cc" filter="url(#soft)"/>
        <polygon points="950,425 958,412 988,405 988,412 958,419" fill="#2e8a5a" stroke="#0c2a30" stroke-width=".8"/>
        <ellipse cx="981" cy="431" rx="5" ry="3" fill="#0e5a70" stroke="#06203c" stroke-width=".7"/>

        <!-- slot -->
        <polygon points="748,343 757,331 778,327 802,332 873,378 870,385 855,395 835,397 757,357" fill="#18ccb4" stroke="#0a2030" stroke-width=".8" stroke-dasharray="3 1"/>
        <path d="M762 352 845 398 866 388 790 345Z" fill="#0650d0" filter="url(#soft)" opacity=".7"/>
        <polygon points="748,343 757,331 778,327 802,332 873,378 868,380 802,340 778,335 755,340" fill="#10615f" stroke="#0c2a30" stroke-width=".8"/>
        <polygon points="770,350 777,347 788,347 853,387 852,392 842,394 832,392 772,357" fill="url(#slotwall)" stroke="#0c1a30" stroke-width=".8"/>

        <!-- through hole -->
        <ellipse cx="780" cy="431" rx="62" ry="35" fill="url(#thruwall)" stroke="#0c2430" stroke-width="1"/>
        <g opacity=".1" fill="#b0e0c0"><polygon points="745,405 770,400 760,425"/><polygon points="800,402 825,415 805,425"/></g>
        <polygon points="722,446 781,424 733,452" fill="#0a2c88"/>
        <path d="M732 452 782 425 828 452Q808 466 775 466 750 465 732 452Z" fill="url(#bg)" stroke="#0c1a20" stroke-width=".6"/>

        ${holes}

        <!-- scalar bar -->
        <text x="402" y="151" font-size="15.500" textLength="142" lengthAdjust="spacingAndGlyphs" fill="#1a1a1a">Coenergy (J/m^3)</text>
        <rect x="430" y="164" width="16" height="179" fill="url(#bar)"/>
        <path d="M430 164H446" stroke="#f4f6fa" stroke-width=".8"/>
        ${tick(164)}${tick(231)}${tick(289)}${tick(342)}
        ${label(168, "1.609e+14")}${label(235, "1.000e+14")}${label(292, "5.000e+13")}${label(346, "1.255e+12")}

        <!-- orientation marker -->
        <path d="M377 648V636" stroke="#0000e0" stroke-width="2.200"/>
        <circle cx="379" cy="634.500" r="1.500" fill="none" stroke="#0000e0" stroke-width=".9"/>
        <path d="M378 648 386 642.500" stroke="#18e018" stroke-width="1.300"/><path d="M385 643 389 640.500" stroke="#107010" stroke-width="2"/><circle cx="390" cy="640" r="1" fill="#18e018"/>
        <path d="M378 648 385 652" stroke="#f00000" stroke-width="1.500"/><path d="M384 652 389 655" stroke="#d00000" stroke-width="2.200"/><circle cx="390" cy="652.500" r="1" fill="#f04040"/>
      </svg>
    `;
  }
}

customElements.define("app-window", AppWindow);
customElements.define("title-bar", TitleBar);
customElements.define("section-heading", SectionHeading);
customElements.define("param-row", ParamRow);
customElements.define("param-slider", ParamSlider);
customElements.define("push-button", PushButton);
customElements.define("part-thumb", PartThumb);
customElements.define("model-note", ModelNote);
customElements.define("tab-bar", TabBar);
customElements.define("tab-item", TabItem);
customElements.define("tool-bar", ToolBar);
customElements.define("tool-icon", ToolIcon);
customElements.define("field-view", FieldView);
</script>
</body>
</html>
